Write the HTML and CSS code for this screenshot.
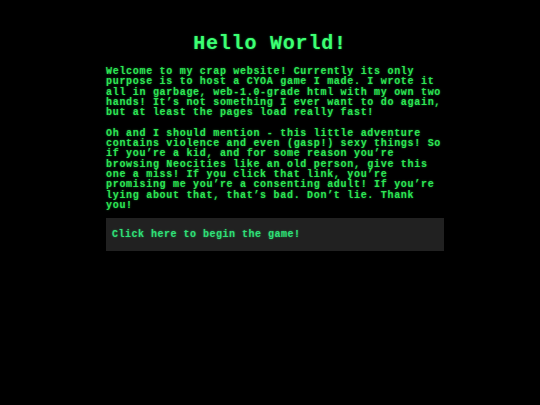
FILE: index.html
```html
<!DOCTYPE html>
<html lang="en">
<head>
<meta charset="utf-8">
<title>Hello World!</title>
<link rel="stylesheet" href="styles.css">
</head>
<body>
<h1 class="title">Hello World!</h1>
<main class="content">
  <p class="para">Welcome to my crap website! Currently its only purpose is to host a CYOA game I made. I wrote it all in garbage, web-1.0-grade html with my own two hands! It’s not something I ever want to do again, but at least the pages load really fast!</p>
  <p class="para">Oh and I should mention - this little adventure contains violence and even (gasp!) sexy things! So if you’re a kid, and for some reason you’re browsing Neocities like an old person, give this one a miss! If you click that link, you’re promising me you’re a consenting adult! If you’re lying about that, that’s bad. Don’t lie. Thank you!</p>
  <a class="start" href="#">Click here to begin the game!</a>
</main>
</body>
</html>
```

FILE: styles.css
```css
html, body {
  margin: 0;
  padding: 0;
  background: #000;
}
body {
  font-family: "Liberation Mono", "DejaVu Sans Mono", monospace;
  font-weight: bold;
  color: #2ee655;
  width: 540px;
  height: 405px;
}
.title {
  margin: 32px 0 0;
  font-size: 20px;
  letter-spacing: 0.8px;
  line-height: 24px;
  text-align: center;
  color: #3cff73;
  text-shadow: 0 0 2px rgba(40, 255, 100, 0.5);
}
.content {
  width: 338px;
  margin: 11px 0 0 calc(50% - 164px);
}
.para {
  margin: 0;
  font-size: 10px;
  letter-spacing: 0.7px;
  line-height: 10.3px;
  text-shadow: 0 0 2px rgba(40, 255, 90, 0.45);
}
.para + .para {
  margin-top: 10.3px;
}
.start {
  display: block;
  margin-top: 7.3px;
  padding: 11.4px 6px 11.3px;
  background: #212121;
  color: #30e07a;
  font-size: 10px;
  letter-spacing: 0.5px;
  line-height: 10.3px;
  text-decoration: none;
  text-shadow: 0 0 2px rgba(40, 255, 110, 0.45);
}
```
